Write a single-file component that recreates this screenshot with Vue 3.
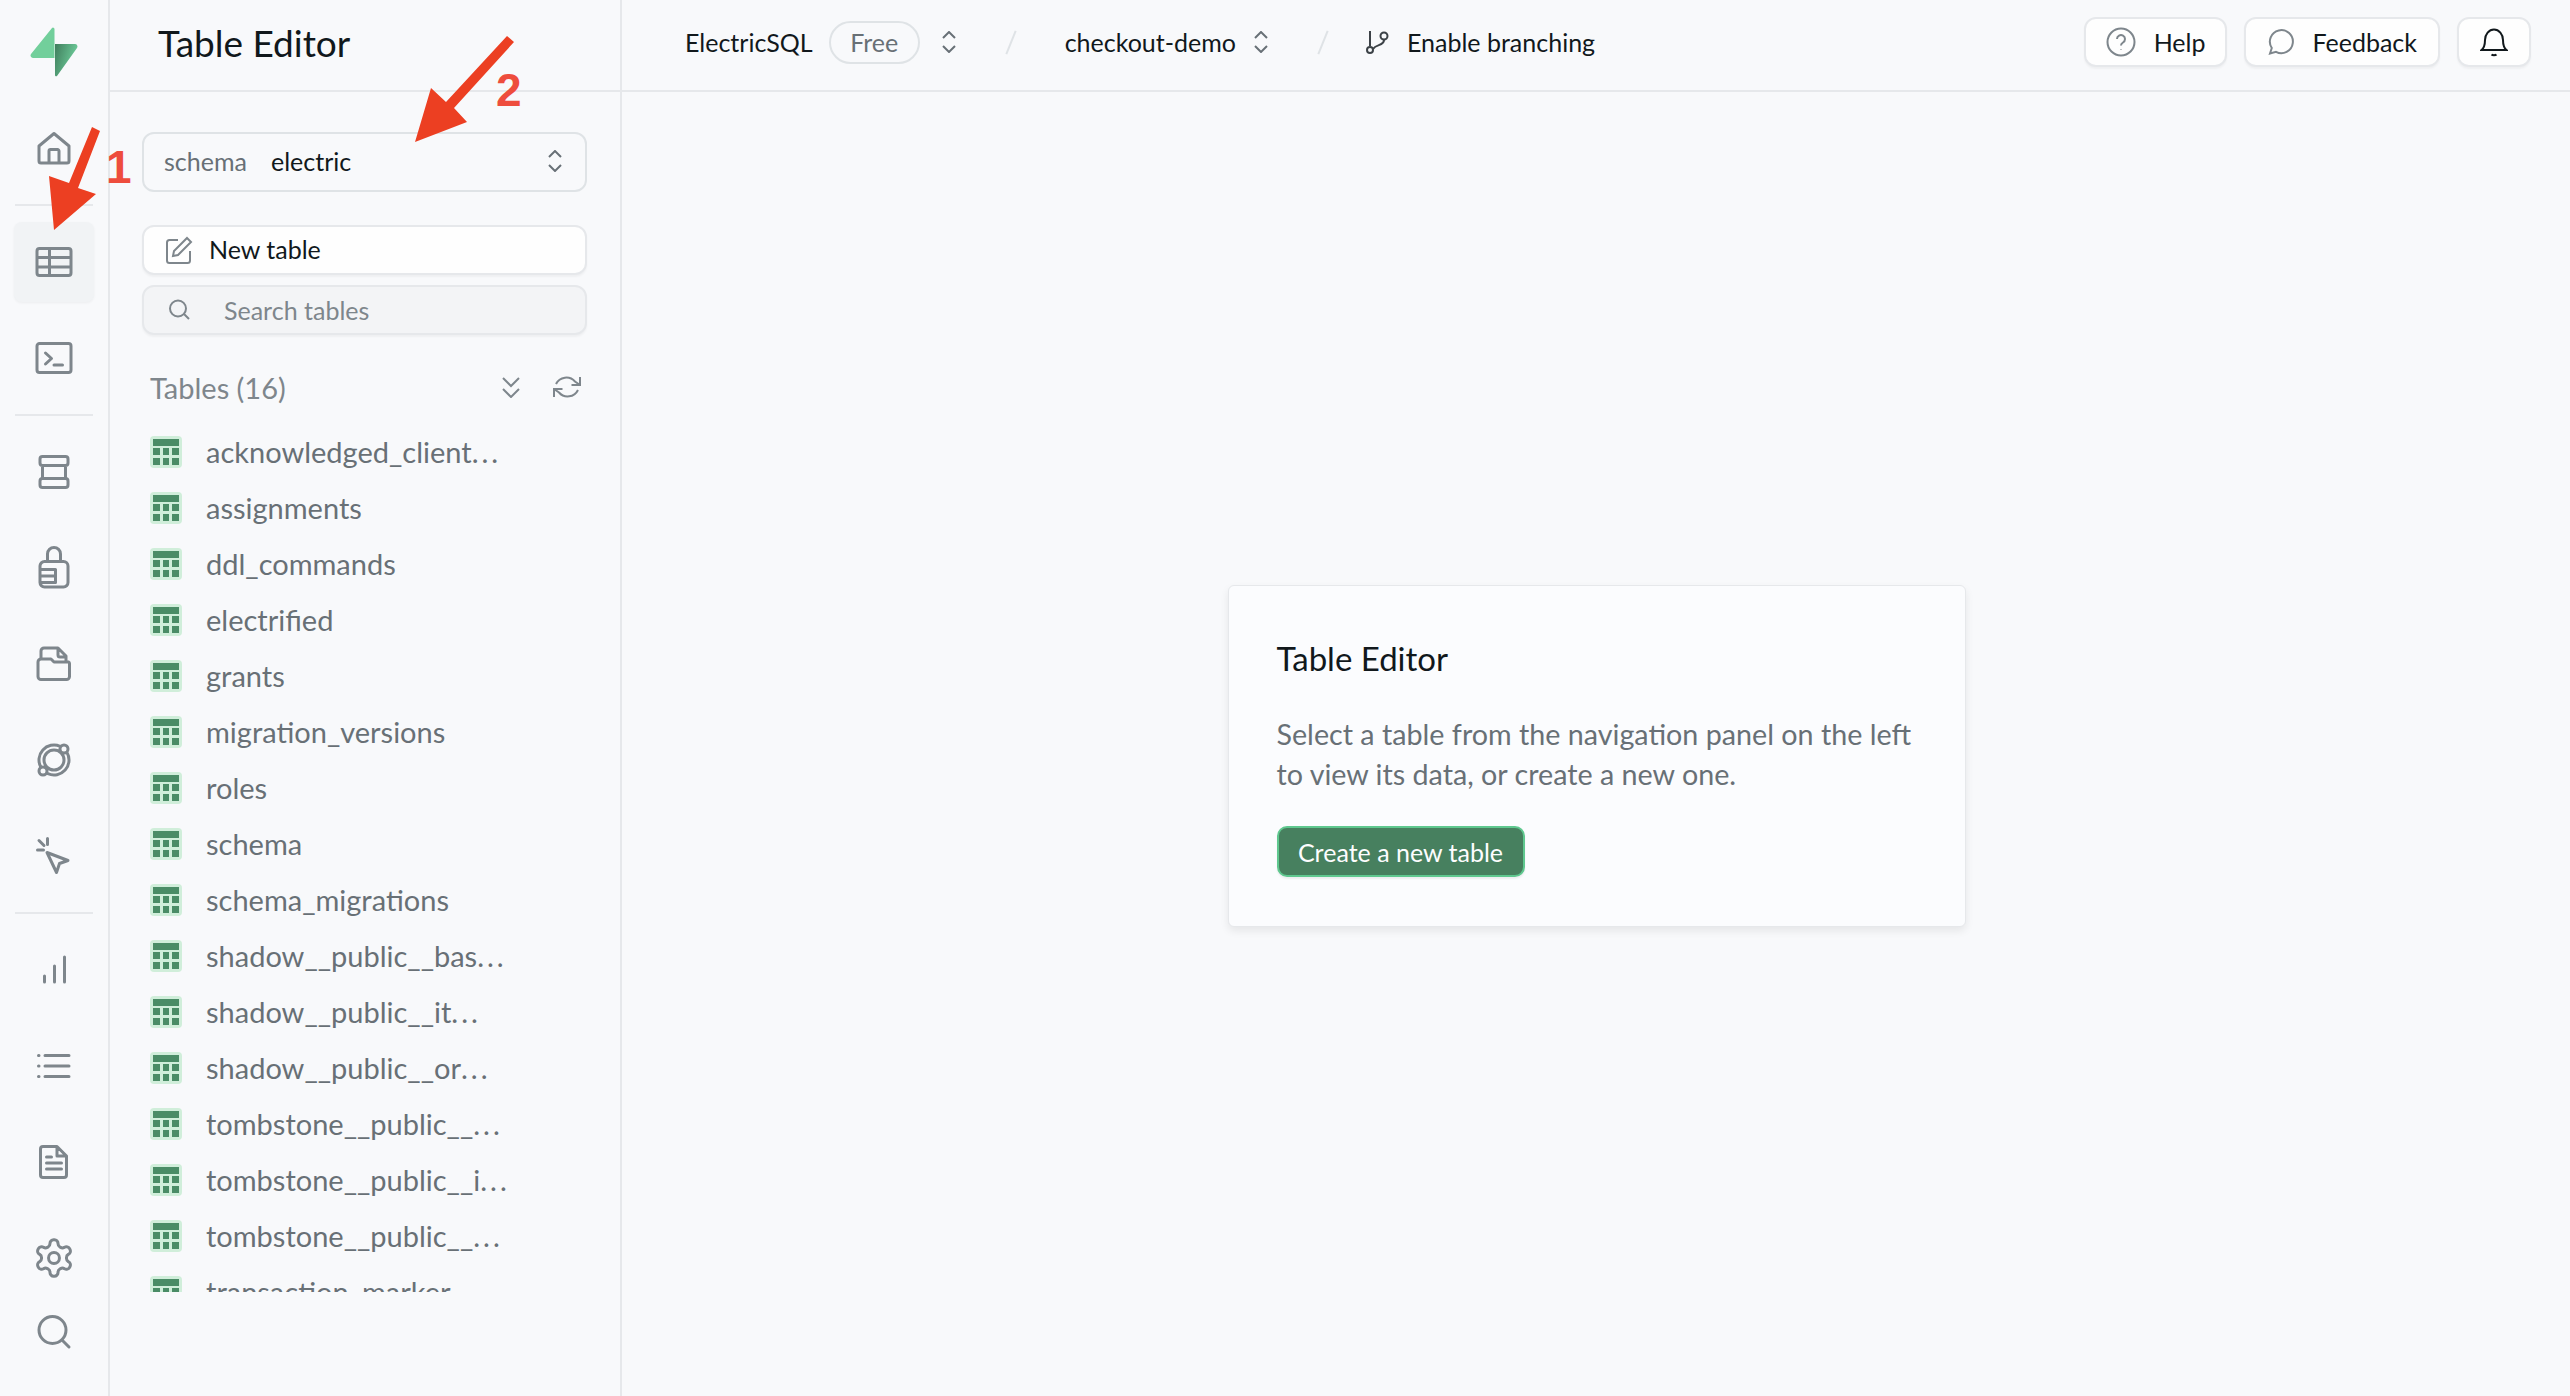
<script setup>
// left nav icons, drawn on a 40x40 box (gear comes from a 24 box, hence vb)
const navGroups = [
  [{ name: 'home', d: 'M20 5.5 L35 18 V33 a2 2 0 0 1-2 2 H7 a2 2 0 0 1-2-2 V18 Z M15 35 V23 a1.5 1.5 0 0 1 1.5-1.5 h7 a1.5 1.5 0 0 1 1.5 1.5 V35' }],
  [
    { name: 'table', active: true, d: 'M5.5 6.5h29a2.5 2.5 0 0 1 2.5 2.5v22a2.5 2.5 0 0 1-2.5 2.5h-29a2.5 2.5 0 0 1-2.5-2.5V9a2.5 2.5 0 0 1 2.5-2.5z M3 15.5h34 M3 25h34 M15.5 6.5v27' },
    { name: 'sql', d: 'M5.5 5.5h29a2.5 2.5 0 0 1 2.5 2.5v24a2.5 2.5 0 0 1-2.5 2.5h-29a2.5 2.5 0 0 1-2.5-2.5V8a2.5 2.5 0 0 1 2.5-2.5z M11.5 15l6 5.5-6 5.5 M20 27h8.5' }
  ],
  [
    { name: 'database', d: 'M8.5 4.5h23a2.5 2.5 0 0 1 2.5 2.5v4a2.5 2.5 0 0 1-2.5 2.5h-23a2.5 2.5 0 0 1-2.5-2.5V7a2.5 2.5 0 0 1 2.5-2.5z M8.5 26.5h23a2.5 2.5 0 0 1 2.5 2.5v4a2.5 2.5 0 0 1-2.5 2.5h-23a2.5 2.5 0 0 1-2.5-2.5v-4a2.5 2.5 0 0 1 2.5-2.5z M8.5 13.5v13 M31.5 13.5v13' },
    { name: 'auth', d: 'M13.5 13.5V6a6.5 6.5 0 0 1 13 0v7.5 M10.5 13.5h19a4.5 4.5 0 0 1 4.5 4.5v16.5a4.5 4.5 0 0 1-4.5 4.5h-19a4.5 4.5 0 0 1-4.5-4.5V18a4.5 4.5 0 0 1 4.5-4.5z M6 21.5h15.5v13H7 M6 28h15.5' },
    { name: 'storage', d: 'M7 15V7a3 3 0 0 1 3-3h14l8 8v5 M24 5v6a2 2 0 0 0 2 2h5 M7 15h10l3 3h14.5a1.5 1.5 0 0 1 1 1.5v13a3 3 0 0 1-3 3H7a3 3 0 0 1-3-3V18a3 3 0 0 1 3-3z' },
    { name: 'realtime', d: 'M33 12.5A15 15 0 0 1 13.9 33.7 M7 27.5A15 15 0 0 1 26.1 6.3 M30 20a10 10 0 1 1-20 0a10 10 0 1 1 20 0z M34 9a4 4 0 1 1-8 0a4 4 0 1 1 8 0z M13 31a4 4 0 1 1-8 0a4 4 0 1 1 8 0z' },
    { name: 'functions', d: 'M13 16.5l21 8-8.5 3-3 9z M3.5 14h6 M5 4.5l5 5 M13.5 2.5v6' }
  ],
  [
    { name: 'reports', d: 'M10.5 26v6 M20.5 16v16 M30.5 7v25' },
    { name: 'logs', d: 'M11 9.5h24 M11 20h24 M11 30.5h24 M4.5 9.5h.5 M4.5 20h.5 M4.5 30.5h.5' },
    { name: 'docs', d: 'M9 4.5h14l9.5 9.5v19a2.5 2.5 0 0 1-2.5 2.5H9a2.5 2.5 0 0 1-2.5-2.5V7A2.5 2.5 0 0 1 9 4.5z M23 4.5v9.5h9.5 M12.5 15h5 M12.5 21h15 M12.5 27h15' },
    { name: 'settings', vb: '1 1 22 22', d: 'M12.22 2h-.44a2 2 0 0 0-2 2v.18a2 2 0 0 1-1 1.73l-.43.25a2 2 0 0 1-2 0l-.15-.08a2 2 0 0 0-2.73.73l-.22.38a2 2 0 0 0 .73 2.73l.15.1a2 2 0 0 1 1 1.72v.51a2 2 0 0 1-1 1.74l-.15.09a2 2 0 0 0-.73 2.73l.22.38a2 2 0 0 0 2.73.73l.15-.08a2 2 0 0 1 2 0l.43.25a2 2 0 0 1 1 1.73V20a2 2 0 0 0 2 2h.44a2 2 0 0 0 2-2v-.18a2 2 0 0 1 1-1.73l.43-.25a2 2 0 0 1 2 0l.15.08a2 2 0 0 0 2.73-.73l.22-.39a2 2 0 0 0-.73-2.73l-.15-.08a2 2 0 0 1-1-1.74v-.5a2 2 0 0 1 1-1.74l.15-.09a2 2 0 0 0 .73-2.73l-.22-.38a2 2 0 0 0-2.73-.73l-.15.08a2 2 0 0 1-2 0l-.43-.25a2 2 0 0 1-1-1.73V4a2 2 0 0 0-2-2z M15 12a3 3 0 1 1-6 0a3 3 0 1 1 6 0z' }
  ]
]

const searchIcon = 'M32 18a13.5 13.5 0 1 1-27 0a13.5 13.5 0 1 1 27 0z M28 28l7 7'

const tables = [
  'acknowledged_client...',
  'assignments',
  'ddl_commands',
  'electrified',
  'grants',
  'migration_versions',
  'roles',
  'schema',
  'schema_migrations',
  'shadow__public__bas...',
  'shadow__public__it...',
  'shadow__public__or...',
  'tombstone__public__...',
  'tombstone__public__i...',
  'tombstone__public__...',
  'transaction_marker'
]
</script>

<template>
  <div class="app">
    <nav class="nav">
      <div class="logo-box">
        <svg width="48" height="50" viewBox="0 0 48 50">
          <defs>
            <linearGradient id="boltGrad" x1="0" y1="0" x2="1" y2="0.4">
              <stop offset="0" stop-color="#3f7d5c" />
              <stop offset="1" stop-color="#6fcf9c" />
            </linearGradient>
          </defs>
          <path d="M22 1 a1.5 1.5 0 0 1 2.5 1 V31 H3 a2.5 2.5 0 0 1-2-4z" fill="#72cf9b" />
          <path d="M25 17 H45 a2.5 2.5 0 0 1 2 4 L27 49 a1.2 1.2 0 0 1-2-1z" fill="url(#boltGrad)" />
        </svg>
      </div>
      <template v-for="(group, i) in navGroups" :key="i">
        <div v-if="i > 0" class="nav-sep"></div>
        <div class="nav-group">
          <div v-for="item in group" :key="item.name" class="nav-item" :class="{ active: item.active }">
            <svg class="nav-icon" width="40" height="40" :viewBox="item.vb || '0 0 40 40'"><path :d="item.d" /></svg>
          </div>
        </div>
      </template>
      <div class="nav-search">
        <svg class="nav-icon" width="40" height="40" viewBox="0 0 40 40"><path :d="searchIcon" /></svg>
      </div>
    </nav>

    <aside class="panel">
      <header class="panel-head">Table Editor</header>
      <div class="panel-body">
        <div class="schema-select">
          <span class="schema-label">schema</span>
          <span class="schema-value">electric</span>
          <svg class="updown" width="16" height="22" viewBox="0 0 16 22"><path d="M2 7l6-6 6 6 M2 15l6 6 6-6" /></svg>
        </div>

        <div class="new-table">
          <svg class="new-icon" width="28" height="28" viewBox="0 0 28 28">
            <path d="M13 4H4.5A2.5 2.5 0 0 0 2 6.5v18A2.5 2.5 0 0 0 4.5 27h18a2.5 2.5 0 0 0 2.5-2.5V15" />
            <path d="M22 2l4 4L13 19l-5 1 1-5z" />
          </svg>
          <span>New table</span>
        </div>
        <div class="search-tables">
          <svg class="search-icon" width="22" height="22" viewBox="0 0 22 22"><path d="M17 9.5a8 8 0 1 1-16 0a8 8 0 1 1 16 0z M15 15l5 5" /></svg>
          <span>Search tables</span>
        </div>

        <div class="tables-head">
          <span>Tables (16)</span>
          <div class="tables-actions">
            <svg width="18" height="21" viewBox="0 0 18 21"><path d="M1 1l8 8 8-8 M1 12l8 8 8-8" /></svg>
            <svg width="28" height="22" viewBox="0 0 28 22">
              <path d="M3 8A11.5 11.5 0 0 1 22 5.5L27 9 M27 1v8h-8.5" />
              <path d="M25 14A11.5 11.5 0 0 1 6 16.5L1 13 M1 21v-8h8.5" />
            </svg>
          </div>
        </div>

        <ul class="table-list">
          <li v-for="(name, i) in tables" :key="i" class="table-row">
            <svg class="grid-icon" width="32" height="32" viewBox="0 0 32 32">
              <rect width="32" height="32" rx="4" fill="#d0eeda" />
              <rect x="3" y="3" width="26" height="7" fill="#4a8c66" />
              <g fill="#4a8c66">
                <rect x="3" y="12" width="7" height="7" />
                <rect x="13" y="12" width="6" height="7" />
                <rect x="22" y="12" width="7" height="7" />
                <rect x="3" y="22" width="7" height="7" />
                <rect x="13" y="22" width="6" height="7" />
                <rect x="22" y="22" width="7" height="7" />
              </g>
            </svg>
            <span class="table-name">{{ name.replace('...', '') }}<span v-if="name.endsWith('...')" class="dots">...</span></span>
          </li>
        </ul>
      </div>
    </aside>

    <main class="main">
      <header class="topbar">
        <span class="crumb">ElectricSQL</span>
        <span class="pill">Free</span>
        <svg class="updown small" width="16" height="22" viewBox="0 0 16 22"><path d="M2 7l6-6 6 6 M2 15l6 6 6-6" /></svg>
        <span class="slash"></span>
        <span class="crumb">checkout-demo</span>
        <svg class="updown small second" width="16" height="22" viewBox="0 0 16 22"><path d="M2 7l6-6 6 6 M2 15l6 6 6-6" /></svg>
        <span class="slash last"></span>
        <svg class="branch" width="24" height="24" viewBox="0 0 24 24">
          <path d="M5 1v15 M19 10c0 6-8 4-11 9" />
          <circle cx="5" cy="20" r="3" />
          <circle cx="19" cy="6" r="3.5" />
        </svg>
        <span class="crumb">Enable branching</span>

        <div class="top-actions">
          <button class="top-btn help">
            <svg width="30" height="30" viewBox="0 0 30 30">
              <circle cx="15" cy="15" r="13.5" />
              <path d="M11 12a4 4 0 1 1 6 3.5c-1.5 1-2 1.5-2 3 M15 22v.5" />
            </svg>
            <span>Help</span>
          </button>
          <button class="top-btn feedback">
            <svg width="26" height="26" viewBox="0 0 26 26">
              <path d="M2 24.5l1.8-5.5A11.5 11.5 0 1 1 8 22.8z" />
            </svg>
            <span>Feedback</span>
          </button>
          <button class="top-btn bell">
            <svg width="28" height="30" viewBox="0 0 28 30">
              <path d="M1.5 23h25c-2.5-2-3.5-4-3.5-10a9 10.5 0 0 0-18 0c0 6-1 8-3.5 10z M11.5 27.5c1 1 4 1 5 0" />
            </svg>
          </button>
        </div>
      </header>

      <section class="content">
        <div class="card">
          <h3>Table Editor</h3>
          <p>Select a table from the navigation panel on the left<br />to view its data, or create a new one.</p>
          <button class="create-btn">Create a new table</button>
        </div>
      </section>
    </main>

    <!-- red annotation arrows drawn on top of the screenshot -->
    <svg class="marks" width="600" height="300" viewBox="0 0 600 300">
      <path d="M92 127 L100 131 L78 188 L96 194 L54 230 L49 176 L69 183 Z" fill="#ec3f22" />
      <path d="M507 36 L514 42 L454 108 L467 122 L415 142 L431 88 L446 102 Z" fill="#ec3f22" />
    </svg>
    <span class="mark-num one">1</span>
    <span class="mark-num two">2</span>
  </div>
</template>

<style scoped>
.app {
  position: relative;
  display: flex;
  width: 2570px;
  height: 1396px;
  overflow: hidden;
  background: #f8f9fb;
  color: #11181c;
  font-family: Lato, "Noto Sans", sans-serif;
}

/* left nav */
.nav {
  width: 110px;
  flex: none;
  border-right: 2px solid #e6e8eb;
  display: flex;
  flex-direction: column;
  align-items: center;
  box-sizing: border-box;
}

.logo-box {
  height: 108px;
  padding-top: 27px;
  box-sizing: border-box;
}

.nav-group {
  display: flex;
  flex-direction: column;
  gap: 16px;
}

.nav-sep {
  width: 78px;
  height: 2px;
  background: #e6e8eb;
  margin: 16px 0;
  flex: none;
}

.nav-item {
  width: 80px;
  height: 80px;
  display: flex;
  align-items: center;
  justify-content: center;
  border-radius: 8px;
}

.nav-item.active {
  background: #f1f3f5;
  box-shadow: 0 1px 3px rgba(0, 0, 0, 0.05);
}

.nav-search {
  margin-top: 4px;
  height: 60px;
  display: flex;
  align-items: center;
}

.nav-icon {
  overflow: visible;
}

.nav-icon path {
  fill: none;
  stroke: #7e868c;
  stroke-width: 3px;
  stroke-linecap: round;
  stroke-linejoin: round;
  vector-effect: non-scaling-stroke;
}

/* table panel */
.panel {
  width: 512px;
  flex: none;
  border-right: 2px solid #e6e8eb;
  box-sizing: border-box;
  display: flex;
  flex-direction: column;
}

.panel-head {
  height: 92px;
  flex: none;
  box-sizing: border-box;
  border-bottom: 2px solid #e6e8eb;
  padding: 0 0 6px 48px;
  display: flex;
  align-items: center;
  font-size: 37px;
}

.panel-body {
  padding: 40px 33px 0 32px;
}

.schema-select {
  height: 60px;
  box-sizing: border-box;
  border: 2px solid #dfe3e6;
  border-radius: 12px;
  display: flex;
  align-items: center;
  padding: 0 22px 2px 20px;
  font-size: 25px;
  margin-bottom: 33px;
}

.schema-label {
  color: #687076;
  width: 107px;
}

.updown {
  margin-left: auto;
}

.updown path {
  fill: none;
  stroke: #687076;
  stroke-width: 2;
}

.new-table,
.search-tables {
  height: 50px;
  box-sizing: border-box;
  border: 2px solid #e6e8eb;
  border-radius: 12px;
  display: flex;
  align-items: center;
  font-size: 25px;
  box-shadow: 0 2px 2px rgba(0, 0, 0, 0.04);
}

.new-table {
  background: #fefefe;
  padding-left: 21px;
  gap: 16px;
  margin-bottom: 10px;
}

.new-table span {
  padding-bottom: 2px;
}

.new-icon path {
  fill: none;
  stroke: #7e868c;
  stroke-width: 2;
}

.search-tables {
  background: #f3f4f6;
  padding-left: 25px;
  gap: 33px;
  color: #7e868c;
}

.search-icon path {
  fill: none;
  stroke: #7e868c;
  stroke-width: 2;
}

.tables-head {
  height: 56px;
  margin: 24px 0 9px;
  padding: 0 6px 0 8px;
  display: flex;
  align-items: center;
  justify-content: space-between;
  color: #7e868c;
  font-size: 29px;
}

.tables-actions {
  display: flex;
  align-items: center;
  gap: 33px;
}

.tables-actions path {
  fill: none;
  stroke: #7e868c;
  stroke-width: 2;
}

.table-list {
  list-style: none;
  margin: 0;
  padding: 0 0 0 8px;
  height: 868px;
  overflow: hidden;
}

.table-row {
  height: 56px;
  display: flex;
  align-items: center;
  gap: 24px;
  color: #687076;
  font-size: 29px;
  white-space: nowrap;
}

.table-name {
  padding-bottom: 2px;
}

.dots {
  letter-spacing: 3px;
}

.grid-icon {
  flex: none;
}

/* main area */
.main {
  flex: 1;
  display: flex;
  flex-direction: column;
  min-width: 0;
}

.topbar {
  height: 92px;
  flex: none;
  box-sizing: border-box;
  border-bottom: 2px solid #e6e8eb;
  padding: 0 39px 6px 63px;
  display: flex;
  align-items: center;
}

.crumb {
  font-size: 25px;
}

.pill {
  margin-left: 16px;
  width: 91px;
  height: 43px;
  box-sizing: border-box;
  border: 2px solid #dfe3e6;
  border-radius: 22px;
  display: flex;
  align-items: center;
  justify-content: center;
  color: #687076;
  font-size: 25px;
}

.updown.small {
  margin-left: 21px;
}

.updown.small.second {
  margin-left: 17px;
}

.slash {
  width: 2px;
  height: 25px;
  background: #dfe3e6;
  transform: rotate(22deg);
  margin: 0 53px;
}

.slash.last {
  margin-right: 41px;
}

.branch {
  margin-right: 18px;
  fill: none;
  stroke: #3c4247;
  stroke-width: 2;
}

.top-actions {
  margin-left: auto;
  display: flex;
  align-items: center;
  gap: 17px;
}

.top-btn {
  height: 50px;
  box-sizing: border-box;
  background: #fefefe;
  border: 2px solid #e6e8eb;
  border-radius: 12px;
  box-shadow: 0 2px 2px rgba(0, 0, 0, 0.04);
  display: flex;
  align-items: center;
  gap: 18px;
  font-family: inherit;
  font-size: 25px;
  color: #11181c;
}

.top-btn svg {
  fill: none;
  stroke: #7e868c;
  stroke-width: 2;
}

.top-btn.help {
  padding: 0 20px;
}

.top-btn.feedback {
  padding: 0 21px 0 22px;
}

.top-btn.bell {
  padding: 0 21px;
}

.top-btn.bell svg {
  stroke: #11181c;
}

.content {
  flex: 1;
  display: flex;
  align-items: center;
  justify-content: center;
  padding: 24px 0 0 1px;
}

.card {
  width: 738px;
  height: 342px;
  box-sizing: border-box;
  background: #fbfcfe;
  border: 1px solid #e6e8eb;
  border-radius: 6px;
  box-shadow: 0 4px 8px rgba(0, 0, 0, 0.08);
  padding: 49px 48px 0;
}

.card h3 {
  margin: 0;
  font-size: 33px;
  font-weight: 400;
  line-height: 46px;
}

.card p {
  margin: 33px 0 0;
  font-size: 28.7px;
  line-height: 40px;
  color: #687076;
  white-space: nowrap;
}

.create-btn {
  margin-top: 32px;
  width: 248px;
  height: 51px;
  box-sizing: border-box;
  background: #47805f;
  border: 2px solid #5fc88f;
  border-radius: 10px;
  color: #fdfdfe;
  font-family: inherit;
  font-size: 25px;
  box-shadow: 0 2px 2px rgba(0, 0, 0, 0.06);
}

/* annotations */
.marks {
  position: absolute;
  left: 0;
  top: 0;
  pointer-events: none;
}

.mark-num {
  position: absolute;
  font-family: "Liberation Sans", sans-serif;
  font-weight: 700;
  font-size: 46px;
  line-height: 46px;
  color: #ee4d3d;
}

.mark-num.one {
  left: 106px;
  top: 144px;
}

.mark-num.two {
  left: 496px;
  top: 67px;
}
</style>
